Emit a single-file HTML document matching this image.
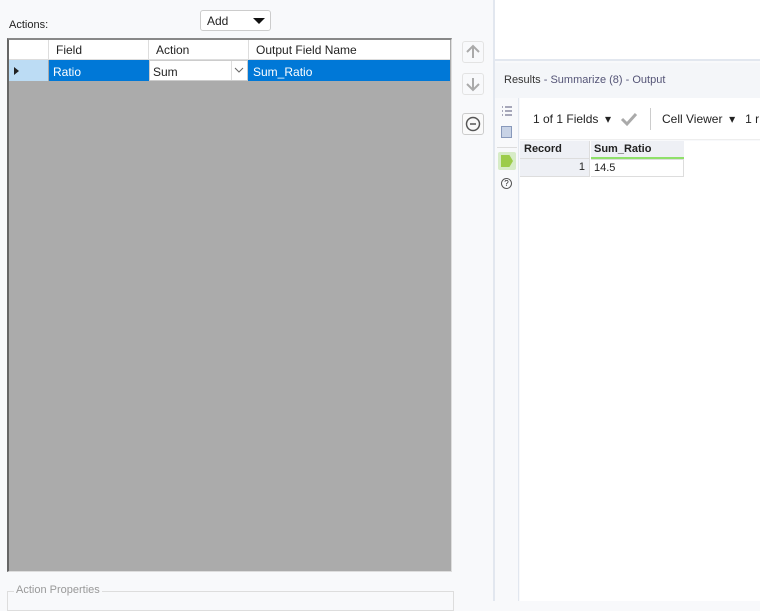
<!DOCTYPE html>
<html><head><style>
*{margin:0;padding:0;box-sizing:border-box}
body{width:760px;height:601px;overflow:hidden;background:#f8f9fb;font-family:"Liberation Sans",sans-serif;font-size:12px;color:#222;position:relative}
.a{position:absolute}
</style></head><body>
<div class="a" style="left:9px;top:19px;font-size:11px">Actions:</div>
<div class="a" style="left:200px;top:10px;width:71px;height:21px;border:1px solid #ccc;border-radius:3px;background:#fff;padding:3px 0 0 6px">Add</div>
<div class="a" style="left:253px;top:18px;width:0;height:0;border-left:6px solid transparent;border-right:6px solid transparent;border-top:6px solid #111"></div>
<div class="a" style="left:7px;top:38px;width:445px;height:534px;background:#ababab;border:1px solid #ddd;border-top:2px solid #888;border-left:2px solid #666"></div>
<div class="a" style="left:9px;top:40px;width:441px;height:20px;background:#fff;border-bottom:1px solid #ddd"></div>
<div class="a" style="left:48px;top:40px;width:1px;height:20px;background:#ddd"></div>
<div class="a" style="left:148px;top:40px;width:1px;height:20px;background:#ddd"></div>
<div class="a" style="left:248px;top:40px;width:1px;height:20px;background:#ddd"></div>
<div class="a" style="left:56px;top:43px">Field</div>
<div class="a" style="left:156px;top:43px">Action</div>
<div class="a" style="left:256px;top:43px">Output Field Name</div>
<div class="a" style="left:9px;top:60px;width:39px;height:21px;background:#bcdcf4"></div>
<div class="a" style="left:14px;top:67px;width:0;height:0;border-top:4px solid transparent;border-bottom:4px solid transparent;border-left:5px solid #222"></div>
<div class="a" style="left:49px;top:60px;width:401px;height:21px;background:#0078d7"></div>
<div class="a" style="left:53px;top:65px;color:#fff">Ratio</div>
<div class="a" style="left:149px;top:60px;width:99px;height:21px;background:#fff;border:1px solid #ccc"></div>
<div class="a" style="left:231px;top:61px;width:1px;height:19px;background:#ddd"></div>
<div class="a" style="left:153px;top:65px">Sum</div>
<svg class="a" style="left:233px;top:66px" width="12" height="8"><path d="M2 2l4 4 4-4" stroke="#666" fill="none"/></svg>
<div class="a" style="left:253px;top:65px;color:#fff">Sum_Ratio</div>
<div class="a" style="left:462px;top:41px;width:22px;height:22px;border:1px solid #e3e3e3;border-radius:3px"></div>
<svg class="a" style="left:462px;top:41px" width="22" height="22"><path d="M11 17V5M5 11l6-6 6 6" stroke="#aaa" stroke-width="2" fill="none"/></svg>
<div class="a" style="left:462px;top:73px;width:22px;height:22px;border:1px solid #e3e3e3;border-radius:3px"></div>
<svg class="a" style="left:462px;top:73px" width="22" height="22"><path d="M11 5v12M5 11l6 6 6-6" stroke="#aaa" stroke-width="2" fill="none"/></svg>
<div class="a" style="left:462px;top:113px;width:22px;height:22px;border:1px solid #ccc;border-radius:3px;background:#fafafa"></div>
<svg class="a" style="left:462px;top:113px" width="22" height="22"><circle cx="11" cy="11" r="6.5" stroke="#555" stroke-width="1.5" fill="none"/><path d="M8 11h6" stroke="#555" stroke-width="1.5"/></svg>
<div class="a" style="left:7px;top:591px;width:447px;height:20px;border:1px solid #ddd"></div>
<div class="a" style="left:14px;top:584px;background:#f8f9fb;padding:0 2px;color:#999;font-size:11px">Action Properties</div>
<div class="a" style="left:493px;top:0;width:2px;height:601px;background:#e2e7ef"></div>
<div class="a" style="left:495px;top:0;width:265px;height:61px;background:#fff;border-bottom:2px solid #e2e7ef"></div>
<div class="a" style="left:495px;top:63px;width:265px;height:35px;background:#f4f6f9"></div>
<div class="a" style="left:504px;top:74px;font-size:11px;color:#333">Results<span style="color:#557">&nbsp;- Summarize (8) - Output</span></div>
<div class="a" style="left:495px;top:98px;width:24px;height:503px;background:#f8f9fb;border-right:1px solid #e2e7ef"></div>
<svg class="a" style="left:501px;top:105px" width="12" height="12"><path d="M1 2h1M1 6h1M1 10h1M4 2h7M4 6h7M4 10h7" stroke="#557" stroke-width="1"/></svg>
<div class="a" style="left:501px;top:126px;width:11px;height:12px;background:#c8d3e6;border:1px solid #8899bb"></div>
<div class="a" style="left:497px;top:147px;width:20px;height:1px;background:#ddd"></div>
<div class="a" style="left:498px;top:152px;width:18px;height:18px;background:#d7ecc7;border-radius:2px"></div>
<div class="a" style="left:501px;top:155px;width:12px;height:12px;background:#9ccc4a;clip-path:polygon(0 0,70% 0,100% 50%,70% 100%,0 100%)"></div>
<div class="a" style="left:501px;top:178px;width:11px;height:11px;border:1px solid #555;border-radius:50%;font-size:8px;text-align:center;line-height:9px">?</div>
<div class="a" style="left:520px;top:98px;width:240px;height:42px;background:#fff;border-bottom:1px solid #eee"></div>
<div class="a" style="left:533px;top:112px">1 of 1 Fields &nbsp;&#9662;</div>
<svg class="a" style="left:620px;top:111px" width="18" height="16"><path d="M2 8l5 5 9-10" stroke="#aaa" stroke-width="3" fill="none"/></svg>
<div class="a" style="left:650px;top:108px;width:1px;height:22px;background:#ccc"></div>
<div class="a" style="left:662px;top:112px">Cell Viewer &nbsp;&#9662; &nbsp; 1 r</div>
<div class="a" style="left:520px;top:141px;width:240px;height:460px;background:#fff"></div>
<div class="a" style="left:520px;top:141px;width:70px;height:18px;background:#eef0f5;border-right:1px solid #ddd;border-bottom:1px solid #ddd;padding:2px 4px;font-weight:bold;font-size:11px">Record</div>
<div class="a" style="left:591px;top:141px;width:93px;height:18px;background:#eef0f5;border-bottom:2px solid #8fe06a;padding:2px 3px;font-weight:bold;font-size:11px">Sum_Ratio</div>
<div class="a" style="left:520px;top:159px;width:70px;height:18px;background:#eef0f5;border-right:1px solid #ddd;border-bottom:1px solid #ddd;text-align:right;padding:2px 4px;font-size:11px">1</div>
<div class="a" style="left:591px;top:159px;width:93px;height:18px;border:1px solid #ddd;border-left:0;padding:2px 3px;font-size:11px">14.5</div>
</body></html>
